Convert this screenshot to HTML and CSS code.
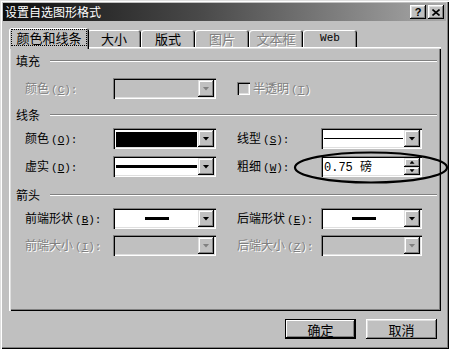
FILE: index.html
```html
<!DOCTYPE html>
<html>
<head>
<meta charset="utf-8">
<link rel="stylesheet" href="styles.css">
</head>
<body>
<div class="window">
  <div class="titlebar">
    <span class="title">设置自选图形格式</span>
    <div class="tb-buttons">
      <span class="tb-btn help">?</span>
      <span class="tb-btn close"><svg width="8" height="7" viewBox="0 0 8 7"><path d="M0.5 0.5L7.5 6.5M7.5 0.5L0.5 6.5" stroke="#000" stroke-width="1.6" fill="none"/></svg></span>
    </div>
  </div>

  <div class="tabs">
    <div class="tab active"><span class="focus">颜色和线条</span></div>
    <div class="tab">大小</div>
    <div class="tab">版式</div>
    <div class="tab disabled">图片</div>
    <div class="tab disabled">文本框</div>
    <div class="tab"><span class="mono">Web</span></div>
  </div>

  <div class="panel">
    <div class="group-head"><span>填充</span><i class="etch"></i></div>
    <div class="grid first">
      <span class="lbl disabled">颜色<span class="k">(<u>C</u>):</span></span>
      <div class="combo disabled"><div class="field"></div><div class="drop"><i class="arrow"></i></div></div>
      <span></span>
      <div class="check disabled"><span class="box"></span><span>半透明<span class="k">(<u>T</u>)</span></span></div>
    </div>

    <div class="group-head second"><span>线条</span><i class="etch"></i></div>
    <div class="grid lines">
      <span class="lbl">颜色<span class="k">(<u>O</u>):</span></span>
      <div class="combo"><div class="field"><i class="swatch"></i></div><div class="drop"><i class="arrow"></i></div></div>
      <span></span>
      <span class="lbl">线型<span class="k">(<u>S</u>):</span></span>
      <div class="combo"><div class="field"><i class="line thin"></i></div><div class="drop"><i class="arrow"></i></div></div>

      <span class="lbl">虚实<span class="k">(<u>D</u>):</span></span>
      <div class="combo"><div class="field"><i class="line thick"></i></div><div class="drop"><i class="arrow"></i></div></div>
      <span></span>
      <span class="lbl">粗细<span class="k">(<u>W</u>):</span></span>
      <div class="combo spin"><div class="field text"><span><span class="num">0.75 </span>磅</span></div><div class="spins"><div class="sbtn"><i class="up"></i></div><div class="sbtn"><i class="arrow"></i></div></div></div>
    </div>

    <div class="group-head third"><span>箭头</span><i class="etch"></i></div>
    <div class="grid arrows">
      <span class="lbl">前端形状<span class="k">(<u>B</u>):</span></span>
      <div class="combo"><div class="field center"><i class="head"></i></div><div class="drop"><i class="arrow"></i></div></div>
      <span></span>
      <span class="lbl">后端形状<span class="k">(<u>E</u>):</span></span>
      <div class="combo"><div class="field center"><i class="head"></i></div><div class="drop"><i class="arrow"></i></div></div>

      <span class="lbl disabled">前端大小<span class="k">(<u>I</u>):</span></span>
      <div class="combo disabled"><div class="field"></div><div class="drop"><i class="arrow"></i></div></div>
      <span></span>
      <span class="lbl disabled">后端大小<span class="k">(<u>Z</u>):</span></span>
      <div class="combo disabled"><div class="field"></div><div class="drop"><i class="arrow"></i></div></div>
    </div>
  </div>

  <div class="buttons">
    <div class="btn default">确定</div>
    <div class="btn">取消</div>
  </div>

  <svg class="mark" width="156" height="34" viewBox="0 0 156 34"><ellipse cx="78" cy="16.5" rx="76" ry="15" fill="none" stroke="#000" stroke-width="2.2"/></svg>
</div>
</body>
</html>
```

FILE: styles.css
```css
* { box-sizing: border-box; }
html, body { margin: 0; padding: 0; }
body {
  width: 449px;
  height: 349px;
  overflow: hidden;
  background: #c0c0c0;
  font-family: "Noto Sans CJK SC", "Noto Sans CJK JP", sans-serif;
  font-size: 12px;
  color: #000;
}
i { display: block; }

.window {
  position: relative;
  width: 449px;
  height: 349px;
  padding: 3px;
  background: #c0c0c0;
  display: flex;
  flex-direction: column;
  box-shadow: inset 1px 1px 0 #dfdfdf, inset 2px 2px 0 #fff, inset -1px -1px 0 #000, inset -2px -2px 0 #808080;
}

/* title bar */
.titlebar {
  height: 18px;
  display: flex;
  align-items: center;
  justify-content: space-between;
  padding: 0 2px 0 2px;
  background: linear-gradient(to right, #0e0e0e 0%, #4a4a4a 45%, #a8a8a8 100%);
}
.title { color: #fff; font-size: 12px; line-height: 14px; }
.tb-buttons { display: flex; gap: 2px; }
.tb-btn {
  width: 16px;
  height: 14px;
  background: #c0c0c0;
  display: flex;
  align-items: center;
  justify-content: center;
  box-shadow: inset -1px -1px 0 #000, inset 1px 1px 0 #fff, inset -2px -2px 0 #808080, inset 2px 2px 0 #dfdfdf;
}
.help { font-family: "Liberation Sans", sans-serif; font-weight: bold; font-size: 11px; line-height: 12px; }

/* tabs */
.tabs {
  display: flex;
  align-items: flex-end;
  height: 19px;
  margin-top: 7px;
  padding-left: 8px;
  z-index: 1;
}
.tab {
  width: 54px;
  height: 17px;
  display: flex;
  align-items: center;
  justify-content: center;
  font-size: 13px;
  line-height: 15px;
  background: #c0c0c0;
  border-radius: 3px 3px 0 0;
  box-shadow: inset 1px 1px 0 #fff, inset -1px 0 0 #000, inset -2px 0 0 #808080;
}
.tab.active {
  width: 80px;
  height: 21px;
  margin: 0 -2px -2px -2px;
  z-index: 2;
  padding-bottom: 2px;
}
.tab .focus {
  outline: 1px dotted #000;
  outline-offset: 0;
  padding: 0 4px;
  line-height: 15px;
}
.tab.disabled { color: #808080; text-shadow: 1px 1px 0 #fff; }
.mono { font-family: "Liberation Mono", monospace; font-size: 11px; }

/* panel */
.panel {
  width: 432px;
  height: 264px;
  margin-left: 6px;
  padding: 7px 4px 0 7px;
  box-shadow: inset 1px 1px 0 #fff, inset 2px 2px 0 #dfdfdf, inset -1px -1px 0 #000, inset -2px -2px 0 #808080;
}
.group-head {
  display: flex;
  align-items: center;
  height: 14px;
  line-height: 14px;
}
.group-head.second { margin-top: 9px; }
.group-head.third { margin-top: 11px; }
.etch {
  flex: 1;
  height: 2px;
  margin-left: 10px;
  border-top: 1px solid #808080;
  border-bottom: 1px solid #fff;
}

.grid {
  display: grid;
  grid-template-columns: 88px 103px 21px 84px 101px;
  grid-auto-rows: 21px;
  align-items: center;
  margin-left: 9px;
}
.grid.first { margin-top: 10px; }
.grid.lines { margin-top: 6px; row-gap: 7px; }
.grid.arrows { margin-top: 6px; row-gap: 6px; }

.lbl { line-height: 14px; white-space: nowrap; }
.k { font-family: "Liberation Mono", monospace; font-size: 11px; margin-left: 2px; }
.disabled { color: #808080; text-shadow: 1px 1px 0 #fff; }

/* combo */
.combo {
  height: 21px;
  display: flex;
  padding: 2px;
  background: #fff;
  box-shadow: inset 1px 1px 0 #808080, inset 2px 2px 0 #000, inset -1px -1px 0 #fff, inset -2px -2px 0 #dfdfdf;
}
.combo.disabled { background: #c0c0c0; }
.field {
  flex: 1;
  position: relative;
  display: flex;
  align-items: center;
  padding: 0 1px;
}
.field.center { justify-content: center; }
.field.text { padding-left: 1px; line-height: 15px; font-size: 12px; white-space: pre; }
.num { font-family: "Liberation Mono", monospace; font-size: 12px; white-space: pre; }
.drop {
  width: 16px;
  background: #c0c0c0;
  display: flex;
  align-items: center;
  justify-content: center;
  box-shadow: inset -1px -1px 0 #000, inset 1px 1px 0 #dfdfdf, inset -2px -2px 0 #808080, inset 2px 2px 0 #fff;
}
.arrow {
  width: 7px;
  height: 4px;
  background: #000;
  clip-path: polygon(0 0, 100% 0, 50% 100%);
}
.combo.disabled .arrow { background: #808080; }
.up {
  width: 7px;
  height: 4px;
  background: #000;
  clip-path: polygon(50% 0, 100% 100%, 0 100%);
}
.swatch { position: absolute; inset: 2px 1px 0 1px; background: #000; }
.line { width: 100%; background: #000; }
.line.thin { height: 1px; }
.line.thick { height: 3px; }
.head { width: 24px; height: 3px; background: #000; }

.spins { width: 16px; display: flex; flex-direction: column; }
.sbtn {
  flex: 1;
  background: #c0c0c0;
  display: flex;
  align-items: center;
  justify-content: center;
  box-shadow: inset -1px -1px 0 #000, inset 1px 1px 0 #dfdfdf, inset -2px -2px 0 #808080, inset 2px 2px 0 #fff;
}
.sbtn .arrow, .sbtn .up { width: 5px; height: 3px; }

/* checkbox */
.check {
  grid-column: 4 / span 2;
  display: flex;
  align-items: center;
  gap: 3px;
  line-height: 14px;
}
.box {
  width: 13px;
  height: 13px;
  background: #c0c0c0;
  box-shadow: inset 1px 1px 0 #808080, inset 2px 2px 0 #000, inset -1px -1px 0 #fff, inset -2px -2px 0 #dfdfdf;
}

/* buttons */
.buttons {
  display: flex;
  justify-content: flex-end;
  gap: 10px;
  margin-top: 8px;
  padding-right: 9px;
}
.btn {
  width: 71px;
  height: 20px;
  display: flex;
  align-items: center;
  justify-content: center;
  font-size: 13px;
  line-height: 15px;
  background: #c0c0c0;
  box-shadow: inset -1px -1px 0 #000, inset 1px 1px 0 #fff, inset -2px -2px 0 #808080, inset 2px 2px 0 #dfdfdf;
}
.btn.default {
  box-shadow: inset 0 0 0 1px #000, inset -2px -2px 0 #000, inset 2px 2px 0 #fff, inset -3px -3px 0 #808080;
}

/* hand-drawn highlight ellipse over the weight field */
.mark {
  position: absolute;
  left: 293px;
  top: 151px;
}
```
